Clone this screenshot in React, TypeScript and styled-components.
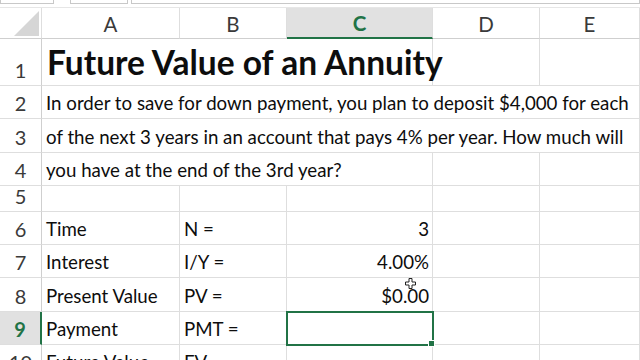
import styled, { createGlobalStyle } from 'styled-components';

const GlobalStyle = createGlobalStyle`
  html, body {
    margin: 0;
    padding: 0;
    background: #ffffff;
    overflow: hidden;
  }
  body {
    font-family: 'Lato', 'Open Sans', sans-serif;
    color: #111;
  }
`;

const GREEN = '#217346';
const GRID = '#dedede';

const Page = styled.div`
  width: 640px;
  height: 360px;
  overflow: hidden;
  background: #fff;
`;

const FormulaStrip = styled.div`
  height: 8px;
  display: flex;
  align-items: flex-start;
  border-bottom: 1px solid #e6e6e6;
  box-sizing: border-box;
`;

const StripBox = styled.div<{ $w: string; $ml?: number }>`
  width: ${({ $w }) => $w};
  margin-left: ${({ $ml }) => $ml ?? 0}px;
  height: 3px;
  border: 1px solid #c8c8c8;
  border-top: none;
  background: #fff;
`;

const Sheet = styled.div`
  display: grid;
  grid-template-columns: 42px 138px 107px 146px 107px 1fr;
  grid-template-rows: 31px 47px 33px 34px 33px 26px 33px 33px 34px 33px 33px;
`;

const Corner = styled.div`
  border-right: 1px solid ${GRID};
  border-bottom: 1px solid #cfcfcf;
  position: relative;
  &::after {
    content: '';
    position: absolute;
    right: 2px;
    bottom: 2px;
    width: 25px;
    height: 25px;
    background: #d6d6d6;
    clip-path: polygon(100% 0, 100% 100%, 0 100%);
  }
`;

const ColHead = styled.div<{ $active?: boolean }>`
  display: flex;
  align-items: center;
  justify-content: center;
  font-size: 20.5px;
  font-weight: ${({ $active }) => ($active ? 700 : 400)};
  color: ${({ $active }) => ($active ? GREEN : '#3a3a3a')};
  background: ${({ $active }) => ($active ? '#e1e1e1' : '#fff')};
  border-right: 1px solid ${GRID};
  border-bottom: ${({ $active }) => ($active ? `2px solid ${GREEN}` : '1px solid #cfcfcf')};
  padding-top: 1px;
`;

const RowHead = styled.div<{ $active?: boolean }>`
  display: flex;
  align-items: flex-end;
  justify-content: center;
  padding-bottom: 4px;
  font-size: 20px;
  line-height: 22px;
  font-weight: ${({ $active }) => ($active ? 700 : 400)};
  color: ${({ $active }) => ($active ? GREEN : '#3a3a3a')};
  background: ${({ $active }) => ($active ? '#e1e1e1' : '#fff')};
  border-right: ${({ $active }) => ($active ? `2px solid ${GREEN}` : `1px solid #cfcfcf`)};
  border-bottom: 1px solid ${GRID};
`;

const Cell = styled.div<{ $span?: number; $right?: boolean; $title?: boolean; $selected?: boolean }>`
  grid-column: span ${({ $span }) => $span ?? 1};
  position: relative;
  display: flex;
  align-items: flex-end;
  justify-content: ${({ $right }) => ($right ? 'flex-end' : 'flex-start')};
  padding: ${({ $title }) => ($title ? '0 4px 5px 5px' : '0 3px 4px 4px')};
  font-size: ${({ $title }) => ($title ? '33.5px' : '18.7px')};
  font-weight: ${({ $title }) => ($title ? 700 : 400)};
  line-height: ${({ $title }) => ($title ? '36px' : '22px')};
  white-space: nowrap;
  color: #0d0d0d;
  border-right: 1px solid ${GRID};
  border-bottom: 1px solid ${GRID};
  outline: ${({ $selected }) => ($selected ? `2px solid ${GREEN}` : 'none')};
  outline-offset: -1px;
  z-index: ${({ $selected }) => ($selected ? 2 : 0)};
`;

const FillHandle = styled.span`
  position: absolute;
  right: -3px;
  bottom: -3px;
  width: 5px;
  height: 5px;
  background: ${GREEN};
  border: 1px solid #fff;
`;

const Pointer = styled.svg`
  position: absolute;
  right: 16px;
  top: 0px;
`;

const cols = ['A', 'B', 'C', 'D', 'E'];

export default function App() {
  return (
    <Page>
      <GlobalStyle />
      <FormulaStrip>
        <StripBox $w="53px" />
        <StripBox $w="56px" $ml={16} />
        <StripBox $w="512px" $ml={3} />
      </FormulaStrip>
      <Sheet>
        <Corner />
        {cols.map((c) => (
          <ColHead key={c} $active={c === 'C'}>
            {c}
          </ColHead>
        ))}

        <RowHead>1</RowHead>
        <Cell $span={3} $title>Future Value of an Annuity</Cell>
        <Cell />
        <Cell />

        <RowHead>2</RowHead>
        <Cell $span={5}>
          In order to save for down payment, you plan to deposit $4,000 for each
        </Cell>

        <RowHead>3</RowHead>
        <Cell $span={5}>
          of the next 3 years in an account that pays 4% per year. How much will
        </Cell>

        <RowHead>4</RowHead>
        <Cell $span={3}>you have at the end of the 3rd year?</Cell>
        <Cell />
        <Cell />

        <RowHead>5</RowHead>
        <Cell />
        <Cell />
        <Cell />
        <Cell />
        <Cell />

        <RowHead>6</RowHead>
        <Cell>Time</Cell>
        <Cell>N =</Cell>
        <Cell $right>3</Cell>
        <Cell />
        <Cell />

        <RowHead>7</RowHead>
        <Cell>Interest</Cell>
        <Cell>I/Y =</Cell>
        <Cell $right>4.00%</Cell>
        <Cell />
        <Cell />

        <RowHead>8</RowHead>
        <Cell>Present Value</Cell>
        <Cell>PV =</Cell>
        <Cell $right>
          $0.00
          <Pointer width="11" height="11" viewBox="0 0 11 11">
            <path
              d="M4 0.5h3v3.5h3.5v3h-3.5v3.5h-3v-3.5h-3.5v-3h3.5z"
              fill="#fff"
              stroke="#222"
              strokeWidth="1"
            />
          </Pointer>
        </Cell>
        <Cell />
        <Cell />

        <RowHead $active>9</RowHead>
        <Cell>Payment</Cell>
        <Cell>PMT =</Cell>
        <Cell $selected>
          <FillHandle />
        </Cell>
        <Cell />
        <Cell />

        <RowHead>10</RowHead>
        <Cell>Future Value</Cell>
        <Cell>FV =</Cell>
        <Cell />
        <Cell />
        <Cell />
      </Sheet>
    </Page>
  );
}
